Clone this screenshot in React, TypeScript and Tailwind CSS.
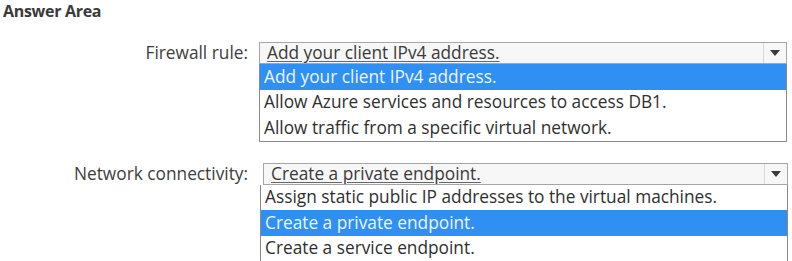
import React from "react";

function Arrow() {
  return (
    <div className="w-[23px] h-full border-l border-[#d6d6d6] flex items-center justify-center">
      <svg width="10" height="6" viewBox="0 0 10 6">
        <polygon points="0,0 10,0 5,6" fill="#3a3a3a" />
      </svg>
    </div>
  );
}

function Dropdown({
  value,
  options,
  selected,
  offset,
}: {
  value: string;
  options: string[];
  selected: number;
  offset: string;
}) {
  return (
    <div className="w-[528px] flex flex-col">
      <div
        className={
          "h-[22px] border border-[#a5a5a5] bg-[#f7f7f7] flex items-center " +
          offset
        }
      >
        <div className="flex-1 pl-[7px] text-[#3a3a3a] underline decoration-[#666] underline-offset-2 leading-none whitespace-nowrap">
          {value}
        </div>
        <Arrow />
      </div>
      <div className="border border-t-0 border-[#8a8a8a] bg-white flex flex-col">
        {options.map((o, i) => (
          <div
            key={o}
            className={
              (i === selected
                ? "bg-[#2f8ff2] text-[#eef6ff] "
                : "text-[#2f2f2f] ") +
              "h-[25.5px] flex items-center pl-[4px] whitespace-nowrap"
            }
          >
            {o}
          </div>
        ))}
      </div>
    </div>
  );
}

export default function App() {
  return (
    <div
      className="w-[792px] h-[261px] bg-white overflow-hidden text-[17.3px]"
      style={{ fontFamily: '"Open Sans", "Noto Sans", sans-serif' }}
    >
      <div className="pl-[3px] h-[22px] font-bold text-[16px] text-[#3a3a3a] leading-[22px] tracking-[-0.3px] whitespace-nowrap">
        Answer Area
      </div>
      <div className="flex mt-[20px]">
        <div className="w-[259px] pr-[11px] text-right text-[#3d3d3d] h-[22px] leading-[22px] whitespace-nowrap">
          Firewall rule:
        </div>
        <Dropdown
          value="Add your client IPv4 address."
          options={[
            "Add your client IPv4 address.",
            "Allow Azure services and resources to access DB1.",
            "Allow traffic from a specific virtual network.",
          ]}
          selected={0}
          offset=""
        />
      </div>
      <div className="flex mt-[21px]">
        <div className="w-[260px] pr-[12px] text-right text-[#3d3d3d] h-[22px] leading-[22px] whitespace-nowrap">
          Network connectivity:
        </div>
        <Dropdown
          value="Create a private endpoint."
          options={[
            "Assign static public IP addresses to the virtual machines.",
            "Create a private endpoint.",
            "Create a service endpoint.",
          ]}
          selected={1}
          offset="ml-[3px]"
        />
      </div>
    </div>
  );
}
